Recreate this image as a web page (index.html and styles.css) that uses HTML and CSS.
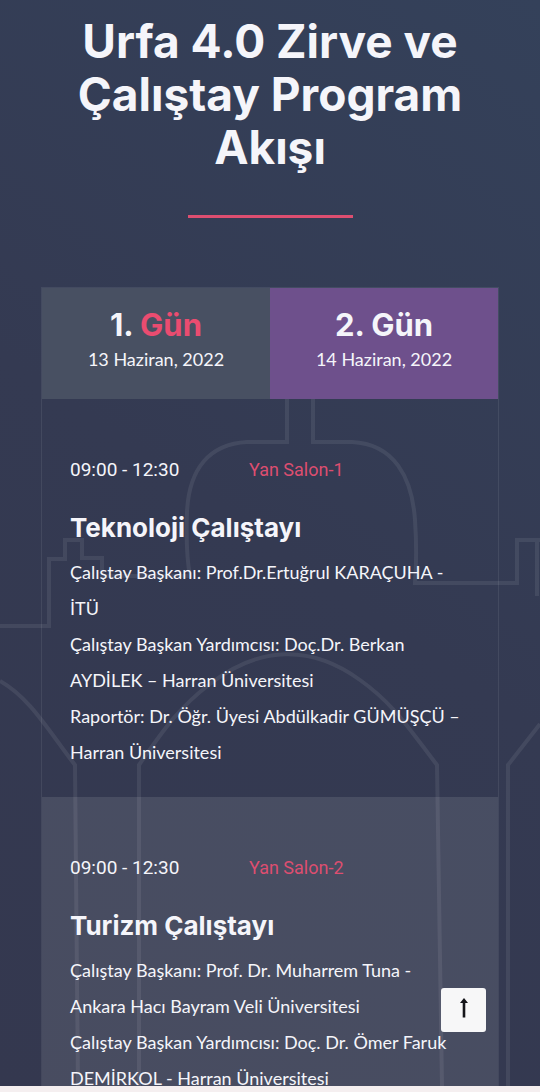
FILE: index.html
```html
<!DOCTYPE html>
<html lang="tr">
<head>
    <meta charset="UTF-8">
    <meta name="viewport" content="width=device-width, initial-scale=1.0">
    <title>Urfa 4.0 Zirve ve Çalıştay Program Akışı</title>
    <link rel="stylesheet" href="styles.css">
</head>
<body>
    <section class="schedule">
        <!-- Arka plan çizimi -->
        <svg class="skyline" viewBox="0 0 540 1086" preserveAspectRatio="xMidYMin slice" aria-hidden="true">
            <path d="M287 399V442H247C210 444 189 468 187 512C186 540 187 560 190 576H102V558H82V540H65V559H49V626H0"/>
            <path d="M313 399V442H352C394 444 412 477 415 520C417 550 416 570 415 583H517V540H540M537 540V596"/>
            <path d="M139 1086V765C162 732 178 708 210 684C260 645 312 645 360 680C394 704 410 730 437 765L442 1086"/>
            <path d="M0 681C30 698 48 730 75 765L78 1086M540 724L508 765V1086"/>
        </svg>

        <div class="container">
            <h2 class="section-title">Urfa 4.0 Zirve ve Çalıştay Program Akışı</h2>
            <hr class="title-line">

            <div class="schedule-box">
                <div class="tabs" role="tablist">
                    <button class="tab active" type="button" role="tab" aria-selected="true">
                        <span class="tab-day">1. <span class="pink">Gün</span></span>
                        <span class="tab-date">13 Haziran, 2022</span>
                    </button>
                    <button class="tab" type="button" role="tab" aria-selected="false">
                        <span class="tab-day">2. Gün</span>
                        <span class="tab-date">14 Haziran, 2022</span>
                    </button>
                </div>

                <article class="session">
                    <div class="session-info">
                        <span class="time">09:00 - 12:30</span>
                        <span class="hall">Yan Salon-1</span>
                    </div>
                    <h3 class="session-title">Teknoloji Çalıştayı</h3>
                    <p class="session-text">
                        Çalıştay Başkanı: Prof.Dr.Ertuğrul KARAÇUHA - İTÜ<br>
                        Çalıştay Başkan Yardımcısı: Doç.Dr. Berkan AYDİLEK – Harran Üniversitesi<br>
                        Raportör: Dr. Öğr. Üyesi Abdülkadir GÜMÜŞÇÜ – Harran Üniversitesi
                    </p>
                </article>

                <article class="session">
                    <div class="session-info">
                        <span class="time">09:00 - 12:30</span>
                        <span class="hall">Yan Salon-2</span>
                    </div>
                    <h3 class="session-title">Turizm Çalıştayı</h3>
                    <p class="session-text">
                        Çalıştay Başkanı: Prof. Dr. Muharrem Tuna - Ankara Hacı Bayram Veli Üniversitesi<br>
                        Çalıştay Başkan Yardımcısı: Doç. Dr. Ömer Faruk DEMİRKOL - Harran Üniversitesi
                    </p>
                </article>
            </div>
        </div>
    </section>

    <div class="next-section"></div>

    <!-- Yukarı çık -->
    <button class="scroll-top" type="button" aria-label="Yukarı çık">
        <svg width="10" height="20" viewBox="0 0 10 20" aria-hidden="true">
            <path d="M5 0L9 5H6.3V19.500H3.700V5H1Z"/>
        </svg>
    </button>
</body>
</html>
```
FILE: styles.css
```css
* {
    box-sizing: border-box;
}

body {
    display: flex;
    flex-direction: column;
    height: 100vh;
    margin: 0;
    overflow: hidden;
    background-color: #f5eff0;
    color: #f5f5fa;
    font-family: Lato, "Noto Sans", sans-serif;
    font-size: 18px;
}

/* Program bölümü */
.schedule {
    position: relative;
    flex: 1;
    min-height: 0;
    overflow: hidden;
    background: linear-gradient(35deg, #34384f 0%, #343a52 50%, #34415a 100%);
}

.skyline {
    position: absolute;
    top: 0;
    left: 0;
    width: 100%;
}

.skyline path {
    fill: none;
    stroke: rgba(255, 255, 255, 0.08);
    stroke-width: 4;
}

.container {
    position: relative;
    padding: 15px 41px 0;
}

.section-title {
    margin: 0;
    font-family: Inter, sans-serif;
    font-size: 46px;
    font-weight: 700;
    line-height: 53px;
    text-align: center;
}

.title-line {
    width: 165px;
    height: 3px;
    margin: 41px auto 69px;
    border: none;
    background-color: #dd4e70;
}

/* Gün sekmeleri */
.schedule-box {
    border: 1px solid rgba(255, 255, 255, 0.08);
}

.tabs {
    display: flex;
}

.tab {
    flex: 1;
    height: 111px;
    padding: 0 0 10px;
    border: none;
    background-color: #6e508c;
    color: inherit;
    font-family: inherit;
    cursor: pointer;
}

.tab.active {
    background-color: #485062;
}

.tab-day,
.tab-date {
    display: block;
}

.tab-day {
    font-family: Inter, sans-serif;
    font-size: 31px;
    font-weight: 700;
    line-height: 40px;
}

.tab-date {
    font-size: 18px;
    line-height: 28px;
}

.pink {
    color: #ea4c70;
}

/* Oturumlar */
.session {
    padding: 53px 28px 27px;
}

.session:nth-child(odd) {
    background-color: rgba(255, 255, 255, 0.1);
}

.session-info {
    display: grid;
    grid-template-columns: 179px 1fr;
    font-family: Roboto, sans-serif;
    font-size: 19px;
    line-height: 36px;
}

.hall {
    color: #dd4e70;
    font-size: 18px;
}

.session-title {
    margin: 22px 0 8px;
    font-family: Inter, sans-serif;
    font-size: 26px;
    font-weight: 700;
    line-height: 36px;
}

.session-text {
    margin: 0;
    line-height: 36px;
}

.next-section {
    height: 6px;
}

/* Yukarı çık butonu */
.scroll-top {
    position: fixed;
    right: 54px;
    bottom: 60px;
    display: flex;
    align-items: center;
    justify-content: center;
    width: 45px;
    height: 44px;
    padding: 0 0 4px;
    border: none;
    border-radius: 3px;
    background-color: #f7f7f8;
    cursor: pointer;
}

.scroll-top path {
    fill: #15151a;
}
```
